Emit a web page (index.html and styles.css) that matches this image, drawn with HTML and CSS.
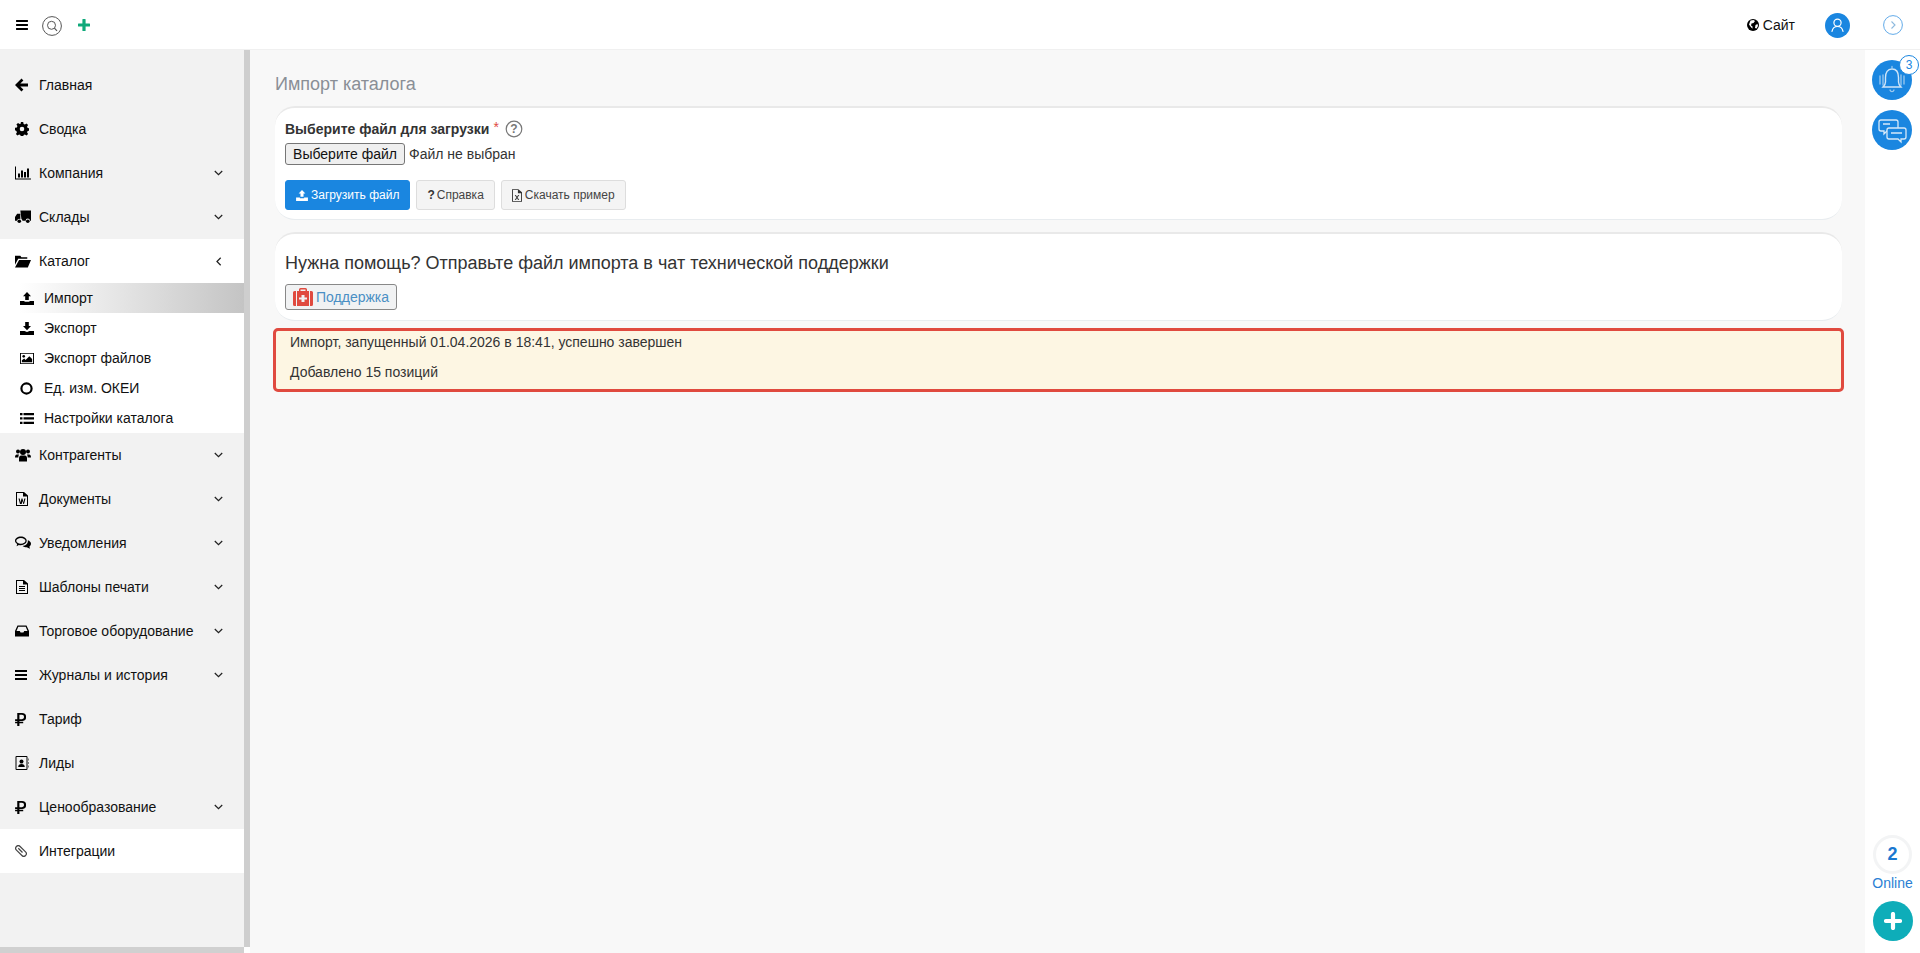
FILE: index.html
```html
<!DOCTYPE html>
<html lang="ru">
<head>
<meta charset="utf-8">
<title>Импорт каталога</title>
<link rel="stylesheet" href="styles.css">
</head>
<body>
<header class="topbar">
  <div class="top-left">
    <svg class="i-burger" viewBox="0 0 13 11"><path d="M0 0h13v2.200H0zM0 4.400h13v2.200H0zM0 8.800h13V11H0z"/></svg>
    <svg class="i-search" viewBox="0 0 20 20"><circle cx="10" cy="10" r="9.400" fill="none" stroke="#555" stroke-width="1"/><circle cx="9.500" cy="9.300" r="4" fill="none" stroke="#555" stroke-width="1"/><path d="M12.400 12.200l2.600 2.600" stroke="#555" stroke-width="1.200"/></svg>
    <svg class="i-plus" viewBox="0 0 12 12"><path d="M4.400.5a.5.5 0 01.5-.5h2.200a.5.5 0 01.5.5v3.900h3.900a.5.5 0 01.5.5v2.200a.5.5 0 01-.5.5H7.600v3.900a.5.5 0 01-.5.5H4.900a.5.5 0 01-.5-.5V7.600H.5a.5.5 0 01-.5-.5V4.900a.5.5 0 01.5-.5h3.900z" fill="#0fa97a"/></svg>
  </div>
  <div class="top-right">
    <a class="site-link"><svg class="i-globe" viewBox="0 0 12 12"><circle cx="6" cy="6" r="6"/><path d="M3.500 1.500l3-.5 1.500 1-1.500 2-2 .5-.5 2 1.500 1v2.200L3.800 8 2 5.500zM8.500 6l2-1 .5 2-1.500 2.500L8 9z" fill="#fff"/></svg>Сайт</a>
    <span class="avatar"><svg viewBox="0 0 25 25"><circle cx="12.500" cy="9.800" r="3.600" fill="none" stroke="#fff" stroke-width="1.200"/><path d="M7 18.300c.6-3 2.600-4.800 5.500-4.800s4.900 1.800 5.500 4.800" fill="none" stroke="#fff" stroke-width="1.200" stroke-linecap="round"/></svg></span>
    <span class="collapse"><svg viewBox="0 0 20 20"><circle cx="10" cy="10" r="9.400" fill="none" stroke="#3a94e2" stroke-width="0.800"/><path d="M8.500 6.500l3.500 3.500-3.500 3.500" fill="none" stroke="#8db9de" stroke-width="1.100"/></svg></span>
  </div>
</header>

<div class="shell">
  <aside class="sidebar">
    <nav class="menu">
      <a class="item"><svg class="ico" viewBox="0 0 14 14"><path d="M6.500.5l1.900 1.900-3.100 3.100H13v3H5.300l3.100 3.100-1.900 1.900L0 7z"/></svg><span>Главная</span></a>
      <a class="item"><svg class="ico" viewBox="0 0 14 14"><path fill-rule="evenodd" d="M5.800 0h2.400l.4 1.900 1.300.5 1.600-1 1.600 1.600-1 1.600.5 1.300 1.900.4v2.400l-1.900.4-.5 1.300 1 1.600-1.600 1.600-1.600-1-1.300.5-.4 1.900H5.800l-.4-1.900-1.300-.5-1.600 1-1.600-1.600 1-1.600-.5-1.300L0 8.200V5.800l1.900-.4.500-1.300-1-1.600L3 .9l1.600 1 1.300-.5zM7 4.700a2.300 2.300 0 100 4.600 2.300 2.300 0 000-4.600z"/></svg><span>Сводка</span></a>
      <a class="item"><svg class="ico ico-w" viewBox="0 0 16 13"><path d="M0 0h1v12h15v1H0zM3 7h2v4H3zM6 4h2v7H6zM9 5.500h2V11H9zM12 2h2v9h-2z"/></svg><span>Компания</span><svg class="chev" viewBox="0 0 8 5"><path d="M.7.700L4 4 7.300.700"/></svg></a>
      <a class="item"><svg class="ico ico-w" viewBox="0 0 15 12"><path d="M5 0h10v9.500h-1a2 2 0 00-4 0H7a2 2 0 00-1-1.700zM0 6l2-3h3v5a2 2 0 00-3 1.500H0z"/><circle cx="4" cy="10" r="1.700"/><circle cx="12" cy="10" r="1.700"/></svg><span>Склады</span><svg class="chev" viewBox="0 0 8 5"><path d="M.7.700L4 4 7.300.700"/></svg></a>

      <div class="group">
        <a class="item"><svg class="ico ico-w" viewBox="0 0 15 12"><path d="M0 1h5l1 1.500h5.500V4H3L0 9.500zM3.800 5H15l-3 7H0z"/></svg><span>Каталог</span><svg class="chev chev-open" viewBox="0 0 5 8"><path d="M4 .7L.7 4 4 7.300"/></svg></a>
        <a class="sub active"><svg class="ico-sub" viewBox="0 0 14 13"><path d="M7 0l4 4.200H8.800V8H5.200V4.200H3zM0 9h4.500v.8h5V9H14v4H0z"/></svg><span>Импорт</span></a>
        <a class="sub"><svg class="ico-sub" viewBox="0 0 14 13"><path d="M5.200 0h3.600v4H11L7 8.200 3 4h2.200zM0 9h4.500L7 10l2.500-1H14v4H0z"/></svg><span>Экспорт</span></a>
        <a class="sub"><svg class="ico-sub" viewBox="0 0 15 12"><path fill-rule="evenodd" d="M0 0h15v12H0zm1 1v10h13V1z"/><circle cx="4" cy="3.700" r="1.400"/><path d="M2 10V8l2.500-2L6 7.500 10 3.500l3 3V10z"/></svg><span>Экспорт файлов</span></a>
        <a class="sub"><svg class="ico-sub ico-ring" viewBox="0 0 12 12"><circle cx="6" cy="6" r="4.700" fill="none" stroke="#000" stroke-width="2"/></svg><span>Ед. изм. ОКЕИ</span></a>
        <a class="sub"><svg class="ico-sub" viewBox="0 0 14 11"><path d="M0 0h2.500v2.300H0zM3.500 0H14v2.300H3.500zM0 4.300h2.500v2.300H0zM3.500 4.300H14v2.300H3.500zM0 8.700h2.500V11H0zM3.500 8.700H14V11H3.500z"/></svg><span>Настройки каталога</span></a>
      </div>

      <a class="item"><svg class="ico ico-w" viewBox="0 0 16 13"><circle cx="3" cy="3" r="2"/><circle cx="13" cy="3" r="2"/><circle cx="8" cy="3.500" r="3"/><path d="M0 9c0-2 .7-3 2-3h2c-.5 1-.7 2-.7 3zM16 9c0-2-.7-3-2-3h-2c.5 1 .7 2 .7 3zM4 13V9.500C4 8 5 7 6 7h4c1 0 2 1 2 2.500V13z"/></svg><span>Контрагенты</span><svg class="chev" viewBox="0 0 8 5"><path d="M.7.700L4 4 7.300.700"/></svg></a>
      <a class="item"><svg class="ico" viewBox="0 0 12 14"><path fill-rule="evenodd" d="M0 0h8l4 3.500V14H0zm1 1v12h10V4.500H7V1z"/><path d="M2.500 6.500h1.200l.9 4 .9-4h1l.9 4 .9-4h1.200l-1.500 5.500H7.300L6.500 9l-.8 3H4z"/></svg><span>Документы</span><svg class="chev" viewBox="0 0 8 5"><path d="M.7.700L4 4 7.300.700"/></svg></a>
      <a class="item"><svg class="ico ico-w" viewBox="0 0 15 12"><path fill-rule="evenodd" d="M5.500 0C8.500 0 11 1.800 11 4s-2.500 4-5.500 4c-.7 0-1.300-.1-1.900-.2L1.500 9l.5-2C.8 6.300 0 5.200 0 4c0-2.200 2.500-4 5.500-4zm0 1.200C3 1.200 1.200 2.500 1.200 4S3 6.800 5.500 6.800 9.800 5.500 9.800 4 8 1.200 5.500 1.200z"/><path d="M12 3.500c1.800.6 3 1.800 3 3.200 0 1-.6 1.900-1.500 2.500l.5 2.300-3-1.500c-1.500 0-3-.5-4-1.300 3 0 5.500-2 5-5.200z"/></svg><span>Уведомления</span><svg class="chev" viewBox="0 0 8 5"><path d="M.7.700L4 4 7.300.700"/></svg></a>
      <a class="item"><svg class="ico" viewBox="0 0 12 14"><path fill-rule="evenodd" d="M0 0h8l4 3.500V14H0zm1 1v12h10V4.500H7V1z"/><path d="M3 6h6v1H3zM3 8h6v1H3zM3 10h6v1H3z"/></svg><span>Шаблоны печати</span><svg class="chev" viewBox="0 0 8 5"><path d="M.7.700L4 4 7.300.700"/></svg></a>
      <a class="item"><svg class="ico" viewBox="0 0 14 11" preserveAspectRatio="xMinYMid"><path fill-rule="evenodd" d="M2.500 0h9L14 5.500V11H0V5.500zM3.300 1.200L1.500 5.500h3.300l.8 1.500h2.800l.8-1.500h3.300l-1.800-4.300z"/></svg><span>Торговое оборудование</span><svg class="chev" viewBox="0 0 8 5"><path d="M.7.700L4 4 7.300.700"/></svg></a>
      <a class="item"><svg class="ico ico-b" viewBox="0 0 13 11" preserveAspectRatio="none"><path d="M0 0h13v2.200H0zM0 4.400h13v2.200H0zM0 8.800h13V11H0z"/></svg><span>Журналы и история</span><svg class="chev" viewBox="0 0 8 5"><path d="M.7.700L4 4 7.300.700"/></svg></a>
      <a class="item"><svg class="ico ico-rub" viewBox="0 0 10 12"><path fill-rule="evenodd" d="M2 0h4.500a3.700 3.700 0 010 7.400H4V8h3.500v1.500H4V12H2V9.500H0V8h2v-.6H0V5.800h2zm2 1.700v4h2.300a2 2 0 000-4z"/></svg><span>Тариф</span></a>
      <a class="item"><svg class="ico" viewBox="0 0 13 14"><path fill-rule="evenodd" d="M1 0h10a1 1 0 011 1v12a1 1 0 01-1 1H1a1 1 0 01-1-1V1a1 1 0 011-1zm0 1v12h10V1z"/><circle cx="6" cy="5.500" r="2"/><path d="M2.700 11c0-2 1.300-3 3.300-3s3.300 1 3.300 3zM12.500 2.500H13v2h-.5zM12.500 6H13v2h-.5zM12.500 9.500H13v2h-.5z"/></svg><span>Лиды</span></a>
      <a class="item"><svg class="ico ico-rub" viewBox="0 0 10 12"><path fill-rule="evenodd" d="M2 0h4.500a3.700 3.700 0 010 7.400H4V8h3.500v1.500H4V12H2V9.500H0V8h2v-.6H0V5.800h2zm2 1.700v4h2.300a2 2 0 000-4z"/></svg><span>Ценообразование</span><svg class="chev" viewBox="0 0 8 5"><path d="M.7.700L4 4 7.300.700"/></svg></a>
      <a class="item item-white"><svg class="ico ico-clip" viewBox="0 0 14 14"><g transform="rotate(-45 7 7)" fill="none" stroke="#444" stroke-width="1.400"><rect x="4" y="-.5" width="6" height="15" rx="3"/><path d="M7 2.500v7"/></g></svg><span>Интеграции</span></a>
    </nav>
  </aside>
  <div class="vscroll"></div>

  <main class="content">
    <h1 class="page-title">Импорт каталога</h1>

    <section class="card card-upload">
      <div class="field-label"><b>Выберите файл для загрузки</b><span class="req">*</span>
        <svg class="i-help" viewBox="0 0 18 18"><circle cx="9" cy="9" r="7.800" fill="none" stroke="#777" stroke-width="1.200"/><text x="9" y="13" text-anchor="middle" class="help-q">?</text></svg>
      </div>
      <div class="file-row"><button class="file-btn" type="button">Выберите файл</button><span class="file-name">Файл не выбран</span></div>
      <div class="btns">
        <a class="btn btn-primary"><svg class="i-btn" viewBox="0 0 14 13"><path d="M7 0l4 4.200H8.800V8H5.200V4.200H3zM0 9h4.500v.8h5V9H14v4H0z" fill="#fff"/></svg>Загрузить файл</a>
        <a class="btn"><b class="q">?</b>Справка</a>
        <a class="btn"><svg class="i-xls" viewBox="0 0 11 14"><path fill-rule="evenodd" d="M0 0h7l4 3.500V14H0zm1 1v12h9V4.500H6.500V1z" fill="#333"/><path d="M3 6.500h1.300L5.500 8.500l1.200-2H8L6.200 9.300 8 12H6.700L5.500 10.100 4.300 12H3l1.800-2.700z" fill="#333"/></svg>Скачать пример</a>
      </div>
    </section>

    <section class="card card-help">
      <h2 class="help-title">Нужна помощь? Отправьте файл импорта в чат технической поддержки</h2>
      <a class="btn-support"><svg class="i-aid" viewBox="0 0 20 18"><path fill-rule="evenodd" d="M6 3V1.500A1.500 1.500 0 017.500 0h5A1.500 1.500 0 0114 1.500V3h-1.500V1.500h-5V3z" fill="#e04a3f"/><path d="M1.500 3H3v15H1.500A1.500 1.500 0 010 16.500v-12A1.500 1.500 0 011.500 3zM17 3h1.500A1.500 1.500 0 0120 4.500v12a1.500 1.500 0 01-1.500 1.500H17z" fill="#e04a3f"/><path fill-rule="evenodd" d="M4 3h12v15H4zm4.500 4v2.500H6v2h2.500V14h3v-2.500H14v-2h-2.500V7z" fill="#e04a3f"/></svg>Поддержка</a>
    </section>

    <section class="notice">
      <p>Импорт, запущенный 01.04.2026 в 18:41, успешно завершен</p>
      <p>Добавлено 15 позиций</p>
    </section>
  </main>

  <aside class="rail">
    <div class="rail-top">
      <span class="round">
        <svg viewBox="0 0 40 40" class="round-ico"><path d="M20 9c-4.500 0-6.500 3.500-6.500 8.500v4.500c0 2-1.500 4-2.500 5h18c-1-1-2.500-3-2.500-5v-4.500C26.500 12.500 24.500 9 20 9z" fill="none" stroke="#cfe5f8" stroke-width="1.400"/><path d="M18 30c.4 1.200 1.200 1.700 2 1.700s1.600-.5 2-1.700M20 6.500V9M8 16v8M32 16v8M11 15v10M29 15v10" fill="none" stroke="#9cc9ef" stroke-width="1.300" stroke-linecap="round"/></svg>
        <span class="badge">3</span>
      </span>
      <span class="round">
        <svg viewBox="0 0 40 40" class="round-ico"><path d="M9 10h15a2 2 0 012 2v7a2 2 0 01-2 2H15l-3 3v-3H9a2 2 0 01-2-2v-7a2 2 0 012-2z" fill="#1a86e0" stroke="#d6e9f9" stroke-width="1.300"/><path d="M17 18h15a2 2 0 012 2v7a2 2 0 01-2 2h-3v3l-3-3H17a2 2 0 01-2-2v-7a2 2 0 012-2z" fill="#1a86e0" stroke="#d6e9f9" stroke-width="1.300"/><path d="M11 14h7M19 23h11" stroke="#d6e9f9" stroke-width="1.300"/></svg>
      </span>
    </div>
    <div class="rail-bottom">
      <span class="online-num">2</span>
      <span class="online-lbl">Online</span>
      <span class="fab"><svg viewBox="0 0 18 18"><path d="M9 2v14M2 9h14" stroke="#fff" stroke-width="4.200" stroke-linecap="round" fill="none"/></svg></span>
    </div>
  </aside>
</div>
<div class="hscroll"></div>
</body>
</html>
```

FILE: styles.css
```css
* { box-sizing: border-box; }
html, body { margin: 0; height: 953px; overflow: hidden; }
body { font-family: "Liberation Sans", Arial, sans-serif; font-size: 14px; color: #222; background: #fff; display: flex; flex-direction: column; position: relative; }

.topbar { height: 50px; flex: none; background: #fff; border-bottom: 1px solid #f0f0f0; display: flex; justify-content: space-between; align-items: center; padding: 0 0 0 16px; }
.top-left { display: flex; align-items: center; }
.i-burger { width: 12px; height: 10px; display: block; }
.i-search { width: 20px; height: 20px; margin: 2px 0 0 14px; display: block; }
.i-plus { width: 12px; height: 12px; margin-left: 16px; display: block; }
.top-right { display: flex; align-items: center; margin-top: 1px; }
.site-link { display: flex; align-items: center; font-size: 14px; color: #111; }
.i-globe { width: 12px; height: 12px; margin-right: 4px; display: block; }
.avatar { width: 25px; height: 25px; border-radius: 50%; background: #1a86e0; margin-left: 30px; display: block; }
.avatar svg { display: block; width: 25px; height: 25px; }
.collapse { margin-left: 33px; margin-right: 17px; display: block; width: 20px; height: 20px; }
.collapse svg { display: block; }

.shell { flex: 1; min-height: 0; display: flex; }
.sidebar { width: 244px; flex: none; background: #f2f2f2; padding-top: 13px; }
.vscroll { width: 6px; flex: none; background: #cecece; margin-bottom: 6px; }
.menu { display: flex; flex-direction: column; }
.item { height: 44px; flex: none; display: grid; grid-template-columns: 24px 1fr; align-items: center; padding-left: 15px; color: #111; font-size: 14px; position: relative; }
.ico { width: 14px; height: 14px; display: block; }
.ico-w { width: 16px; }
.ico-b { width: 12px; height: 10px; }
.ico-rub { width: 11px; height: 13px; }
.ico-clip { width: 12px; height: 12px; }
.chev { position: absolute; left: 214px; top: 50%; margin-top: -3px; width: 9px; height: 6px; fill: none; stroke: #222; stroke-width: 1.100; }
.chev-open { width: 6px; height: 9px; margin-top: -4px; left: 216px; }
.group { background: #fff; }
.sub { height: 30px; display: flex; align-items: center; padding-left: 20px; color: #111; font-size: 14px; }
.sub.active { background: linear-gradient(90deg, #fff 8%, #c4c4c4 100%); }
.ico-sub { width: 14px; height: 13px; flex: none; display: block; margin-right: 10px; }
.ico-ring { width: 13px; height: 13px; margin-right: 11px; }
.item-white { background: #fff; }

.content { flex: 1; min-width: 0; background: #f8f8f8; padding: 24px 23px 0 25px; }
.page-title { margin: 0 0 12px; font-size: 18px; font-weight: 400; line-height: 20px; color: #8a8f96; }
.card { background: #fff; border-radius: 20px; border-top: 2px solid #e9e9e9; border-bottom: 1px solid #e8ecef; }
.card-upload { height: 114px; padding: 12px 10px 0; }
.field-label { display: flex; align-items: center; font-size: 14px; line-height: 18px; color: #333; }
.req { color: #e04a3f; margin: -4px 0 0 4px; }
.i-help { width: 18px; height: 18px; margin-left: 6px; }
.help-q { font: 700 12px "Liberation Sans", sans-serif; fill: #777; }
.file-row { margin-top: 5px; height: 22px; display: flex; align-items: center; }
.file-btn { width: 120px; height: 22px; padding: 0; font: 14px "Liberation Sans", Arial, sans-serif; color: #111; background: #efefef; border: 1px solid #767676; border-radius: 3px; }
.file-name { margin-left: 4px; color: #333; }
.btns { display: flex; gap: 6px; margin-top: 15px; }
.btn { height: 30px; display: flex; align-items: center; padding: 0 10px; border: 1px solid #ddd; border-radius: 3px; background: #f4f4f4; font-size: 12px; color: #444; }
.btn-primary { background: #1a86e0; border-color: #1a86e0; color: #fff; }
.i-btn { width: 12px; height: 11px; margin-right: 3px; }
.q { margin-right: 2px; color: #333; }
.i-xls { width: 10px; height: 13px; margin-right: 3px; }

.card-help { margin-top: 12px; height: 89px; padding: 19px 10px 0; }
.help-title { margin: 0; font-size: 18px; font-weight: 400; line-height: 20px; color: #333; }
.btn-support { margin-top: 11px; width: 112px; height: 26px; display: flex; align-items: center; padding-left: 7px; background: #f1f2f3; border: 1px solid #888; border-radius: 3px; color: #4a8fc4; font-size: 14px; }
.i-aid { width: 20px; height: 18px; margin-right: 3px; }

.notice { margin: 7px -2px 0; height: 64px; background: #fdf6e3; border: 3px solid #e04a3f; border-radius: 5px; padding: 2px 14px; color: #333; font-size: 14px; line-height: 18px; }
.notice p { margin: 0 0 12px; }

.rail { width: 55px; flex: none; background: #fff; display: flex; flex-direction: column; justify-content: space-between; align-items: center; padding: 10px 0 0; }
.rail-top { display: flex; flex-direction: column; gap: 10px; margin-right: 1px; }
.round { width: 40px; height: 40px; border-radius: 50%; background: #1a86e0; display: block; position: relative; }
.round-ico { width: 40px; height: 40px; display: block; }
.badge { position: absolute; right: -7px; top: -5px; width: 20px; height: 20px; border-radius: 50%; background: #fff; border: 1px solid #1a86e0; color: #1a86e0; font-size: 12px; line-height: 18px; text-align: center; }
.rail-bottom { display: flex; flex-direction: column; align-items: center; padding-bottom: 12px; }
.online-num { width: 39px; height: 39px; border-radius: 50%; border: 3px solid #f3f4f5; display: flex; align-items: center; justify-content: center; font-weight: 700; font-size: 18px; color: #1a78d0; }
.online-lbl { font-size: 14px; line-height: 16px; margin-top: 1px; color: #2a7fd4; }
.fab { width: 40px; height: 40px; border-radius: 50%; background: #0eadb9; margin-top: 10px; display: flex; align-items: center; justify-content: center; }
.fab svg { width: 18px; height: 18px; display: block; }

.hscroll { position: absolute; left: 0; bottom: 0; width: 244px; height: 6px; background: #d0d0d0; }
```
